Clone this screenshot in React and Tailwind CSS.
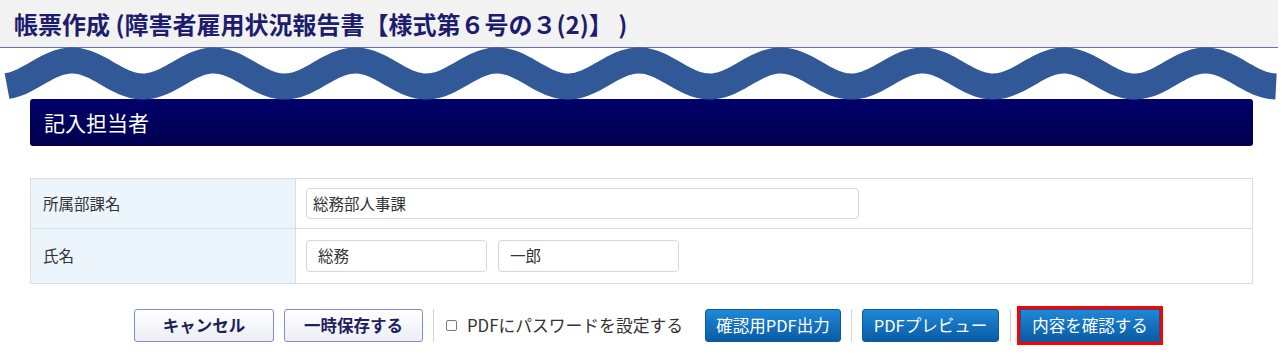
import React from "react";

const jp = { fontFamily: '"Noto Sans CJK JP", "Noto Sans", sans-serif' };

function Wave() {
  // sine wave: peaks at x = 72 + 141.7k
  const pts = [];
  for (let x = 7; x <= 1277; x += 3) {
    const y = 25.5 - 13 * Math.cos((2 * Math.PI * (x - 72)) / 141.7);
    pts.push(`${x},${y.toFixed(2)}`);
  }
  return (
    <svg width="1283" height="51" className="block overflow-visible">
      <polyline points={pts.join(" ")} fill="none" stroke="#315897" strokeWidth="26" />
    </svg>
  );
}

function WhiteButton({ children, className }) {
  return (
    <button
      className={
        "h-[33px] rounded-[3px] border border-[#7f8cd3] bg-gradient-to-b from-white to-[#eceef4] text-[16.5px] font-bold leading-none text-[#1e1f5e] " +
        className
      }
    >
      {children}
    </button>
  );
}

function BlueButton({ children, className }) {
  return (
    <button
      className={
        "h-[33px] rounded-[3px] border border-[#0b5a9e] bg-gradient-to-b from-[#1e88d8] to-[#0b5ba5] text-[16.5px] leading-none text-white " +
        className
      }
    >
      {children}
    </button>
  );
}

function Sep({ className }) {
  return <span className={"h-[33px] w-px bg-[#d4d4d4] " + className} />;
}

export default function App() {
  return (
    <div className="w-[1283px] bg-white" style={jp}>
      <div className="flex h-[48px] w-[1278px] items-center border-b border-[#6b6bb5] bg-[#f2f2f2] pl-[14px]">
        <h1 className="text-[24px] font-bold leading-none text-[#1c1d6f]">
          帳票作成 (障害者雇用状況報告書【様式第６号の３(2)】 )
        </h1>
      </div>

      <Wave />

      <div className="mx-[30px] flex h-[47px] items-center rounded-[3px] bg-gradient-to-b from-[#00006a] to-[#00004e] pl-[14px]">
        <h2 className="text-[21px] leading-none text-white">記入担当者</h2>
      </div>

      <table className="mx-[30px] mt-[32px] w-[1223px] border-collapse text-[15.5px] text-[#333]">
        <tbody>
          <tr className="h-[50px]">
            <th className="w-[265px] border border-[#dcdcdc] bg-[#edf5fc] pl-[12px] text-left font-normal">所属部課名</th>
            <td className="border border-[#dcdcdc] pl-[10px]">
              <div className="flex h-[31px] w-[553px] items-center rounded-[4px] border border-[#d6d6d6] pl-[6px]">総務部人事課</div>
            </td>
          </tr>
          <tr className="h-[55px]">
            <th className="border border-[#dcdcdc] bg-[#edf5fc] pl-[12px] text-left font-normal">氏名</th>
            <td className="border border-[#dcdcdc] pl-[10px]">
              <div className="flex gap-[11px]">
                <div className="flex h-[32px] w-[181px] items-center rounded-[4px] border border-[#d6d6d6] pl-[11px]">総務</div>
                <div className="flex h-[32px] w-[181px] items-center rounded-[4px] border border-[#d6d6d6] pl-[11px]">一郎</div>
              </div>
            </td>
          </tr>
        </tbody>
      </table>

      <div className="mt-[22px] flex items-center pl-[134px]">
        <WhiteButton className="w-[140px]">キャンセル</WhiteButton>
        <WhiteButton className="ml-[10px] w-[139px]">一時保存する</WhiteButton>
        <Sep className="ml-[10px]" />
        <label className="ml-[12px] flex w-[238px] items-center text-[16.8px] leading-none text-[#333]">
          <span className="h-[11px] w-[11px] rounded-[2px] border border-[#777] bg-white" />
          <span className="ml-[10px]">PDFにパスワードを設定する</span>
        </label>
        <BlueButton className="ml-[21px] w-[136px]">確認用PDF出力</BlueButton>
        <Sep className="ml-[10px]" />
        <BlueButton className="ml-[10px] w-[137px]">PDFプレビュー</BlueButton>
        <Sep className="ml-[11px]" />
        <div className="ml-[6px] border-[3px] border-[#ff0000]">
          <BlueButton className="block w-[140px] rounded-none">内容を確認する</BlueButton>
        </div>
      </div>
    </div>
  );
}
